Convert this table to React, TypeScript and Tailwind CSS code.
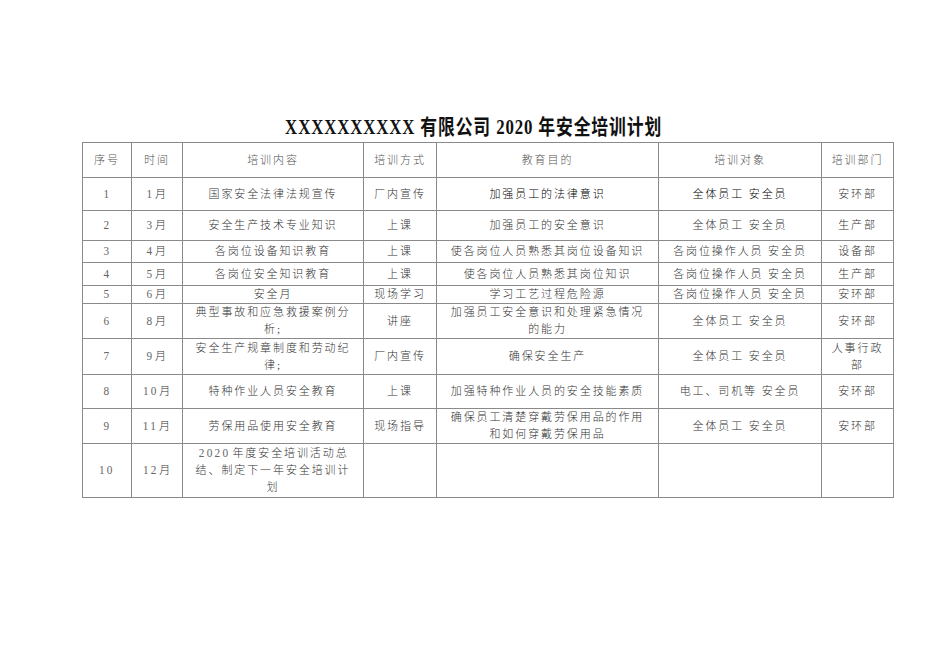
import React from "react";

type Row = {
  no: string;
  month: string;
  content: React.ReactNode;
  method: React.ReactNode;
  goal: React.ReactNode;
  target: React.ReactNode;
  dept: React.ReactNode;
  h: string;
  strong?: boolean;
};

const Num = ({ children }: { children: React.ReactNode }) => (
  <span className="text-[12.5px] tracking-[2.5px] font-normal text-[#666] scale-x-[0.9] inline-block">{children}</span>
);

const rows: Row[] = [
  { no: "1", month: "1", content: "国家安全法律法规宣传", method: "厂内宣传", goal: "加强员工的法律意识", target: "全体员工 安全员", dept: "安环部", h: "h-[33px]", strong: true },
  { no: "2", month: "3", content: "安全生产技术专业知识", method: "上课", goal: "加强员工的安全意识", target: "全体员工 安全员", dept: "生产部", h: "h-[30px]" },
  { no: "3", month: "4", content: "各岗位设备知识教育", method: "上课", goal: "使各岗位人员熟悉其岗位设备知识", target: "各岗位操作人员 安全员", dept: "设备部", h: "h-[22px]" },
  { no: "4", month: "5", content: "各岗位安全知识教育", method: "上课", goal: "使各岗位人员熟悉其岗位知识", target: "各岗位操作人员 安全员", dept: "生产部", h: "h-[23px]" },
  { no: "5", month: "6", content: "安全月", method: "现场学习", goal: "学习工艺过程危险源", target: "各岗位操作人员 安全员", dept: "安环部", h: "h-[18px]" },
  {
    no: "6",
    month: "8",
    content: (<>典型事故和应急救援案例分<br />析;</>),
    method: "讲座",
    goal: (<>加强员工安全意识和处理紧急情况<br />的能力</>),
    target: "全体员工 安全员",
    dept: "安环部",
    h: "h-[35px]",
  },
  {
    no: "7",
    month: "9",
    content: (<>安全生产规章制度和劳动纪<br />律;</>),
    method: "厂内宣传",
    goal: "确保安全生产",
    target: "全体员工 安全员",
    dept: (<>人事行政<br />部</>),
    h: "h-[36px]",
  },
  { no: "8", month: "10", content: "特种作业人员安全教育", method: "上课", goal: "加强特种作业人员的安全技能素质", target: "电工、司机等 安全员", dept: "安环部", h: "h-[34px]" },
  {
    no: "9",
    month: "11",
    content: "劳保用品使用安全教育",
    method: "现场指导",
    goal: (<>确保员工清楚穿戴劳保用品的作用<br />和如何穿戴劳保用品</>),
    target: "全体员工 安全员",
    dept: "安环部",
    h: "h-[35px]",
  },
  {
    no: "10",
    month: "12",
    content: (<><Num>2020</Num>年度安全培训活动总<br />结、制定下一年安全培训计<br />划</>),
    method: "",
    goal: "",
    target: "",
    dept: "",
    h: "h-[54px]",
  },
];

const headers = ["序号", "时间", "培训内容", "培训方式", "教育目的", "培训对象", "培训部门"];

const cell = "border border-[#8a8a8a] text-center align-middle p-0 leading-[17px] whitespace-nowrap";

export default function App() {
  return (
    <div
      className="w-[950px] h-[672px] bg-white text-[#333] text-[11px] tracking-[1.9px] font-light"
      style={{ fontFamily: '"Liberation Serif", "Noto Sans CJK SC", serif' }}
    >
      <div className="pt-[112px] pl-[82px]">
        <div className="w-[811px] h-[30px] flex justify-center pr-[28px]">
          <h1 className="inline-block font-bold text-[21px] leading-[30px] tracking-[1.1px] text-[#111] scale-x-[0.8] whitespace-nowrap">
            XXXXXXXXXX 有限公司 2020 年安全培训计划
          </h1>
        </div>
        <table className="table-fixed border-collapse w-[811px]">
          <colgroup>
            <col className="w-[49px]" />
            <col className="w-[51px]" />
            <col className="w-[181px]" />
            <col className="w-[73px]" />
            <col className="w-[222px]" />
            <col className="w-[163px]" />
            <col className="w-[72px]" />
          </colgroup>
          <thead>
            <tr className="h-[35px]">
              {headers.map((t) => (
                <th key={t} className={`${cell} font-light text-[#555]`}>
                  {t}
                </th>
              ))}
            </tr>
          </thead>
          <tbody>
            {rows.map((r) => (
              <tr key={r.no} className={r.h}>
                <td className={cell}>
                  <Num>{r.no}</Num>
                </td>
                <td className={cell}>
                  <Num>{r.month}</Num>月
                </td>
                <td className={cell}>{r.content}</td>
                <td className={cell}>{r.method}</td>
                <td className={`${cell} ${r.strong ? "text-[#000]" : ""}`}>{r.goal}</td>
                <td className={`${cell} ${r.strong ? "text-[#000]" : ""}`}>{r.target}</td>
                <td className={cell}>{r.dept}</td>
              </tr>
            ))}
          </tbody>
        </table>
      </div>
    </div>
  );
}
